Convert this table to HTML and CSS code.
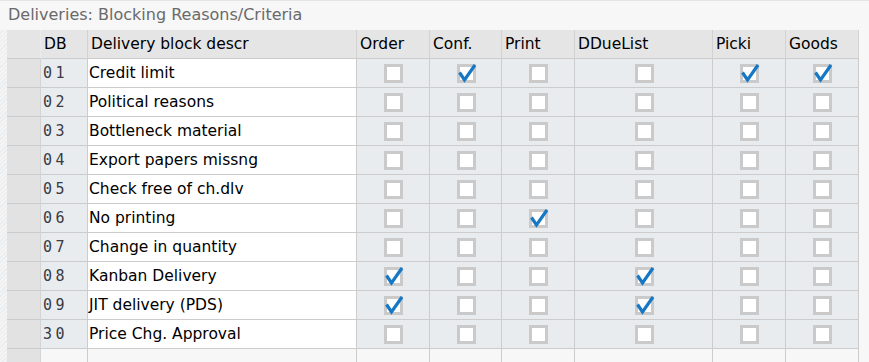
FILE: index.html
```html
<!DOCTYPE html>
<html lang="en">
<head>
<meta charset="utf-8">
<title>Deliveries: Blocking Reasons/Criteria</title>
<link rel="stylesheet" href="styles.css">
</head>
<body>
<div class="panel">
  <div class="panel-title">Deliveries: Blocking Reasons/Criteria</div>
  <div class="grid-wrap">
    <div class="edge"></div>
    <table class="grid">
      <colgroup>
        <col class="c-sel"><col class="c-db"><col class="c-desc">
        <col class="c-order"><col class="c-conf"><col class="c-print">
        <col class="c-ddue"><col class="c-picki"><col class="c-goods">
      </colgroup>
      <thead>
        <tr>
          <th class="sel"></th><th>DB</th><th>Delivery block descr</th>
          <th>Order</th><th>Conf.</th><th>Print</th><th>DDueList</th><th>Picki</th><th>Goods</th>
        </tr>
      </thead>
      <tbody id="rows"></tbody>
      <tfoot>
        <tr class="empty">
          <td class="sel"></td><td></td><td></td><td></td><td></td><td></td><td></td><td></td><td></td>
        </tr>
      </tfoot>
    </table>
  </div>
</div>
<script src="app.js"></script>
</body>
</html>
```

FILE: app.js
```js
// Delivery block codes with flags: Order, Conf., Print, DDueList, Picki, Goods
const blocks = [
  ["01", "Credit limit",          [0, 1, 0, 0, 1, 1]],
  ["02", "Political reasons",     [0, 0, 0, 0, 0, 0]],
  ["03", "Bottleneck material",   [0, 0, 0, 0, 0, 0]],
  ["04", "Export papers missng",  [0, 0, 0, 0, 0, 0]],
  ["05", "Check free of ch.dlv",  [0, 0, 0, 0, 0, 0]],
  ["06", "No printing",           [0, 0, 1, 0, 0, 0]],
  ["07", "Change in quantity",    [0, 0, 0, 0, 0, 0]],
  ["08", "Kanban Delivery",       [1, 0, 0, 1, 0, 0]],
  ["09", "JIT delivery (PDS)",    [1, 0, 0, 1, 0, 0]],
  ["30", "Price Chg. Approval",   [0, 0, 0, 0, 0, 0]]
];

const tick = '<svg class="tick" viewBox="0 0 19 19" width="19" height="19">' +
  '<polyline points="2.5,8.5 7.5,16 18,1" fill="none" stroke="#1677c4" stroke-width="3.2" stroke-linejoin="miter" stroke-linecap="butt"/></svg>';

const body = document.getElementById("rows");
body.innerHTML = blocks.map(([code, text, flags]) =>
  '<tr><td class="sel"></td><td class="code">' + code + '</td><td class="desc">' + text + '</td>' +
  flags.map(f => '<td class="chk"><span class="box">' + (f ? tick : "") + '</span></td>').join("") +
  '</tr>'
).join("");
```

FILE: styles.css
```css
html, body {
  margin: 0;
  padding: 0;
  background: #f7f7f7;
}

.panel {
  width: 869px;
  height: 362px;
  overflow: hidden;
  border-top: 1px solid #e4e4e4;
  box-sizing: border-box;
  font-family: "DejaVu Sans", "Liberation Sans", sans-serif;
}

.panel-title {
  height: 29px;
  padding-left: 8px;
  line-height: 28px;
  font-size: 16px;
  color: #6a6a6a;
}

.grid-wrap {
  display: flex;
  align-items: flex-start;
}

.edge {
  width: 7px;
  align-self: stretch;
  height: 340px;
  background: repeating-linear-gradient(135deg, #f4f4f4 0 2px, #eaedf0 2px 3px);
}

.grid {
  border-collapse: separate;
  border-spacing: 0;
  table-layout: fixed;
  width: 852px;
}

.c-sel { width: 34px; }
.c-db { width: 47px; }
.c-desc { width: 269px; }
.c-order { width: 73px; }
.c-conf { width: 72px; }
.c-print { width: 73px; }
.c-ddue { width: 138px; }
.c-picki { width: 73px; }
.c-goods { width: 73px; }

.grid th,
.grid td {
  height: 28px;
  padding: 0;
  border-right: 1px solid #cccccc;
  border-bottom: 1px solid #cccccc;
  white-space: nowrap;
  overflow: visible;
  vertical-align: middle;
  box-sizing: content-box;
}

.grid th {
  background: #e5e5e5;
  font-weight: normal;
  font-size: 15.5px;
  color: #000;
  text-align: left;
  padding-left: 3px;
  border-right-color: #d2d2d2;
}

.grid th.sel {
  padding-left: 0;
  border-right-color: #ebebeb;
}

.grid td.sel {
  background: #e2e2e2;
  border-right-color: #d4d4d4;
}

.grid td.code {
  background: #e9ecef;
  font-family: "DejaVu Sans Mono", monospace;
  font-size: 15px;
  letter-spacing: 3.5px;
  color: #3a3a44;
  padding-left: 2px;
}

.grid td.desc {
  background: #ffffff;
  font-size: 15.5px;
  color: #000;
  padding-left: 1px;
}

.grid td.chk {
  background: #e9ecef;
  text-align: center;
  line-height: 0;
}

.box {
  display: inline-block;
  position: relative;
  width: 13px;
  height: 13px;
  border: 3px solid #cacaca;
  background: #ffffff;
  vertical-align: middle;
  margin-left: 1px;
}

.tick {
  position: absolute;
  left: -3px;
  top: -3px;
  overflow: visible;
}

.grid tr.empty td {
  background: #f7f7f7;
}

.grid tr.empty td.sel {
  background: #e2e2e2;
}
```
